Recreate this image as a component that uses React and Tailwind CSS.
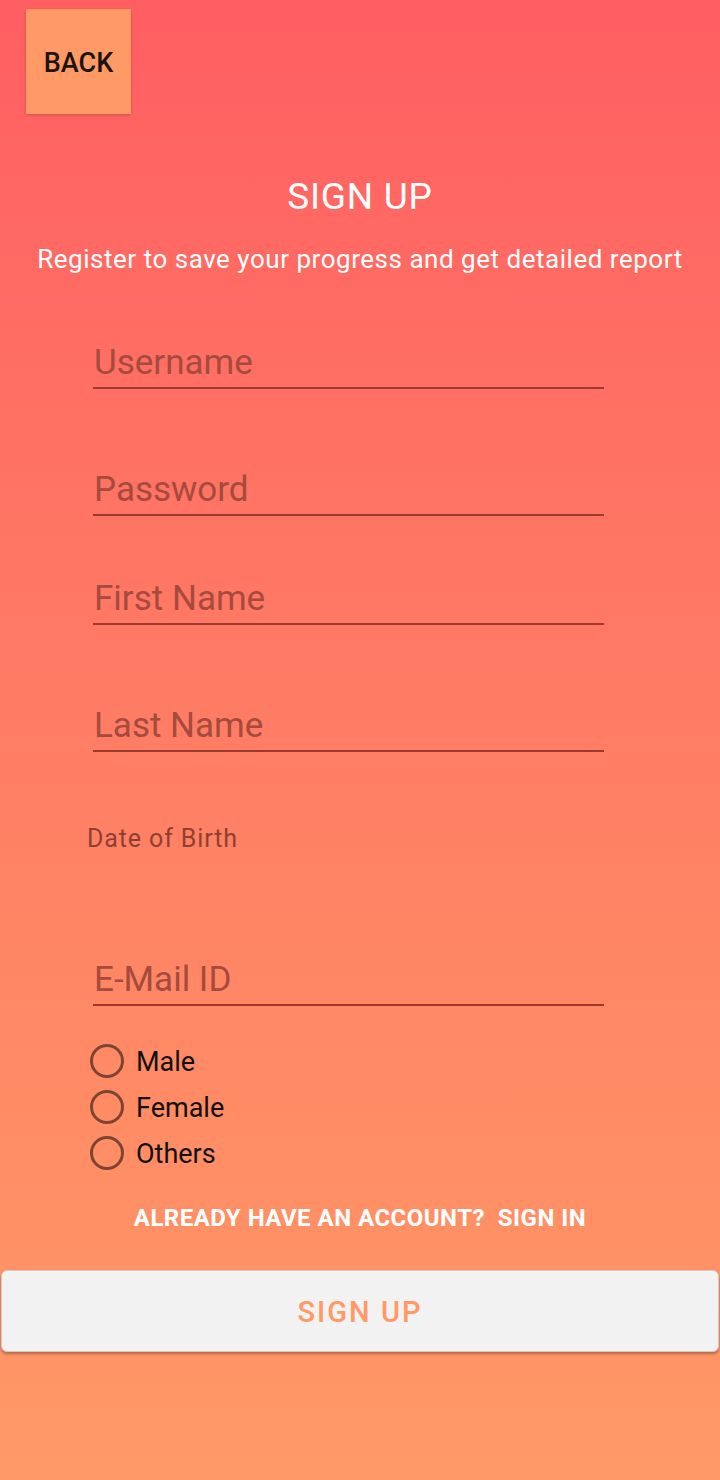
export default function App() {
  return (
    <div
      className="w-[720px] min-h-[1480px] flex flex-col bg-gradient-to-b from-[#ff5e62] to-[#ff9966]"
      style={{ fontFamily: "Roboto, 'Noto Sans', sans-serif" }}
    >
      <div className="pl-[26px] pt-[9px]">
        <button className="w-[105px] h-[105px] pt-[4px] bg-[#ff9966] text-[#1c1410] text-[27px] font-medium leading-none flex items-center justify-center shadow-[0_1px_3px_rgba(0,0,0,0.2)]">
          BACK
        </button>
      </div>

      <h1 className="mt-[62px] text-center text-white text-[37px] tracking-[0.02em] leading-[42px] font-normal">SIGN UP</h1>
      <p className="mt-[27px] text-center text-white text-[26px] tracking-[0.02em] leading-[28px]">
        Register to save your progress and get detailed report
      </p>

      <div className="flex flex-col ml-[93px] w-[511px]">
        <Field label="Username" className="mt-[67px]" />
        <Field label="Password" className="mt-[78px]" />
        <Field label="First Name" className="mt-[60px]" />
        <Field label="Last Name" className="mt-[78px]" />
      </div>

      <div className="ml-[87px] mt-[73px] text-[25px] tracking-[0.035em] leading-[28px] text-[#8f3f31]">Date of Birth</div>

      <div className="flex flex-col ml-[93px] w-[511px]">
        <Field label="E-Mail ID" className="mt-[104px]" />
      </div>

      <div className="flex flex-col ml-[90px] mt-[32px]">
        {["Male", "Female", "Others"].map((g) => (
          <label key={g} className="flex items-center h-[46px] gap-[12px]">
            <span className="w-[34px] h-[34px] rounded-full border-[3px] border-[#7d4531] box-border" />
            <span className="text-[27px] leading-[30px] pt-[1px] text-[#111111]">{g}</span>
          </label>
        ))}
      </div>

      <div className="mt-[28px] text-center text-white font-bold text-[24px] tracking-[0.02em] leading-[28px] whitespace-pre">
        {"ALREADY HAVE AN ACCOUNT?  SIGN IN"}
      </div>

      <button className="mt-[38px] mx-px h-[82px] pt-[4px] rounded-[6px] bg-[#f2f2f2] text-[#ff9966] text-[29px] tracking-[0.07em] font-medium flex items-center justify-center shadow-[0_2px_3px_rgba(0,0,0,0.3)] border border-[#d9c8c0]">
        SIGN UP
      </button>
    </div>
  );
}

function Field({ label, className = "" }) {
  return (
    <div className={`flex flex-col ${className}`}>
      <div className="text-[35px] leading-[42px] pt-[2px] text-[#a64a3e] pl-px">{label}</div>
      <div className="mt-[3px] h-[2px] bg-[#9d3a2f]" />
    </div>
  );
}
